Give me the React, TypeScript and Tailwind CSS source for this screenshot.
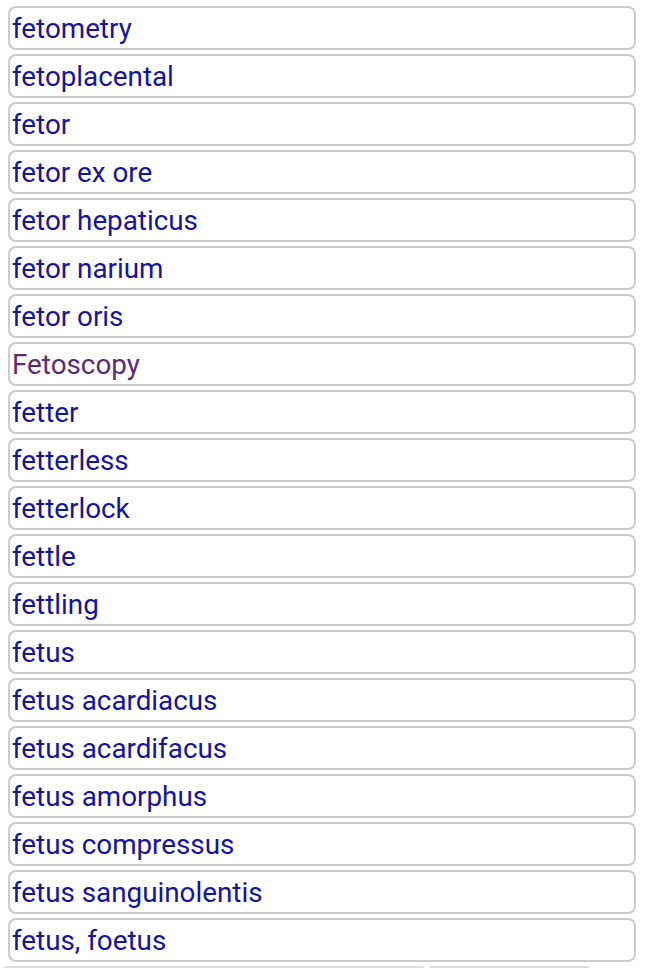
const words: { text: string; visited?: boolean }[] = [
  { text: 'fetometry' },
  { text: 'fetoplacental' },
  { text: 'fetor' },
  { text: 'fetor ex ore' },
  { text: 'fetor hepaticus' },
  { text: 'fetor narium' },
  { text: 'fetor oris' },
  { text: 'Fetoscopy', visited: true },
  { text: 'fetter' },
  { text: 'fetterless' },
  { text: 'fetterlock' },
  { text: 'fettle' },
  { text: 'fettling' },
  { text: 'fetus' },
  { text: 'fetus acardiacus' },
  { text: 'fetus acardifacus' },
  { text: 'fetus amorphus' },
  { text: 'fetus compressus' },
  { text: 'fetus sanguinolentis' },
  { text: 'fetus, foetus' },
];

export default function App() {
  return (
    <div className="h-[968px] overflow-hidden bg-white font-['Roboto',sans-serif]">
      <ul className="flex flex-col gap-1 pt-[6px] pl-2 pr-[9px]">
        {words.map((w) => (
          <li
            key={w.text}
            className="h-11 flex items-center rounded-lg border-2 border-[#cccccc] pl-[2px] pt-[2px]"
          >
            <a
              className={`text-[27.8px] leading-none ${w.visited ? 'text-[#5b2a78]' : 'text-[#14149e]'}`}
            >
              {w.text}
            </a>
          </li>
        ))}
        <li className="flex gap-[3px] -ml-[5px]">
          <div className="h-10 w-[422px] rounded border-2 border-[#dddddd]" />
          <div className="h-10 w-[162px] rounded border-2 border-[#dddddd]" />
        </li>
      </ul>
    </div>
  );
}
